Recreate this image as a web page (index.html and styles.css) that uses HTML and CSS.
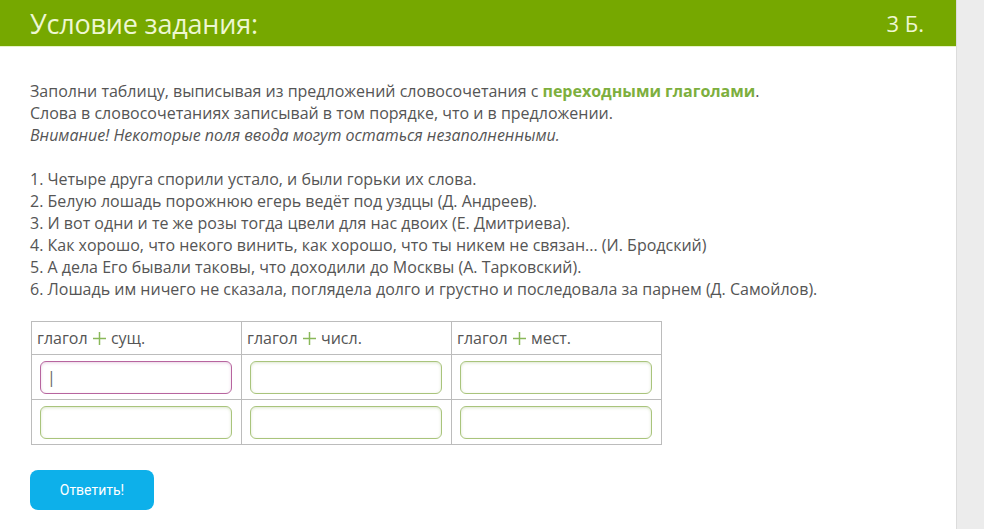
FILE: index.html
```html
<!DOCTYPE html>
<html lang="ru">
<head>
    <meta charset="UTF-8">
    <meta name="viewport" content="width=device-width, initial-scale=1.0">
    <title>Условие задания</title>
    <link rel="stylesheet" href="styles.css">
</head>
<body>
    <div class="page">
        <div class="task">
            <div class="task-header">
                <h1>Условие задания:</h1>
                <span class="points">3 Б.</span>
            </div>
            <div class="task-body">
                <p>Заполни таблицу, выписывая из предложений словосочетания с <b class="accent">переходными глаголами</b>.<br>
                Слова в словосочетаниях записывай в том порядке, что и в предложении.<br>
                <i>Внимание! Некоторые поля ввода могут остаться незаполненными.</i></p>

                <p class="sentences">1. Четыре друга спорили устало, и были горьки их слова.<br>
                2. Белую лошадь порожнюю егерь ведёт под уздцы (Д. Андреев).<br>
                3. И вот одни и те же розы тогда цвели для нас двоих (Е. Дмитриева).<br>
                4. Как хорошо, что некого винить, как хорошо, что ты никем не связан... (И. Бродский)<br>
                5. А дела Его бывали таковы, что доходили до Москвы (А. Тарковский).<br>
                6. Лошадь им ничего не сказала, поглядела долго и грустно и последовала за парнем (Д. Самойлов).</p>

                <table class="answers">
                    <thead>
                        <tr>
                            <th>глагол <svg class="plus" viewBox="0 0 14 14"><path d="M7 0v14M0 7h14"/></svg> сущ.</th>
                            <th>глагол <svg class="plus" viewBox="0 0 14 14"><path d="M7 0v14M0 7h14"/></svg> числ.</th>
                            <th>глагол <svg class="plus" viewBox="0 0 14 14"><path d="M7 0v14M0 7h14"/></svg> мест.</th>
                        </tr>
                    </thead>
                    <tbody>
                        <tr>
                            <td><input type="text" class="field field-active" value="|"></td>
                            <td><input type="text" class="field"></td>
                            <td><input type="text" class="field"></td>
                        </tr>
                        <tr>
                            <td><input type="text" class="field"></td>
                            <td><input type="text" class="field"></td>
                            <td><input type="text" class="field"></td>
                        </tr>
                    </tbody>
                </table>

                <button class="submit">Ответить!</button>
            </div>
        </div>
        <div class="sidebar"></div>
    </div>
</body>
</html>
```

FILE: styles.css
```css
html, body { margin: 0; padding: 0; height: 100%; }
body { font-family: "Open Sans", "Noto Sans", sans-serif; color: #555; background: #fff; overflow: hidden; }
.page { display: flex; height: 529px; }
.task { width: 956px; background: #fff; }
.sidebar { flex: 1; background: #ececec; border-left: 1px solid #dcdcdc; }

.task-header { display: flex; justify-content: space-between; align-items: center; height: 46px; padding: 0 32px 0 30px; background: #76a800; border-bottom: 1px solid #e6f3c6; color: #eef7d2; }
.task-header h1 { margin: 0; font-size: 27px; font-weight: 400; letter-spacing: -0.2px; }
.points { font-size: 22px; }

.task-body { padding: 33px 30px 0 30px; }
.task-body p { margin: 0 0 22px 0; font-size: 16px; line-height: 22px; }
.task-body p.sentences { margin-bottom: 21px; }
.accent { color: #7daf3e; font-weight: 700; }

.answers { border-collapse: collapse; margin: 0 0 25px 1px; }
.answers th, .answers td { border: 1px solid #bcbcbc; width: 193px; }
.answers th { text-align: left; font-weight: 400; font-size: 16px; height: 32px; padding: 0 8px 0 5px; }
.answers td { height: 44px; padding: 0 8px; }
.plus { width: 13px; height: 13px; vertical-align: -1px; margin: 0 1px; fill: none; stroke: #8ab85a; stroke-width: 1.6; }

.field { display: block; box-sizing: border-box; width: 192px; height: 33px; border: 1px solid #a9c47c; border-radius: 6px; box-shadow: inset 0 1px 3px rgba(120,160,60,0.25); font-family: inherit; font-size: 16px; color: #666; padding: 0 6px; outline: none; background: #fff; }
.field-active { border-color: #b7659f; box-shadow: inset 0 1px 3px rgba(170,80,150,0.25); }

.submit { display: block; width: 124px; height: 40px; border: none; border-radius: 8px; background: #0db0ea; color: #fff; font-family: "Roboto", "Open Sans", sans-serif; font-size: 14px; cursor: pointer; }
```
